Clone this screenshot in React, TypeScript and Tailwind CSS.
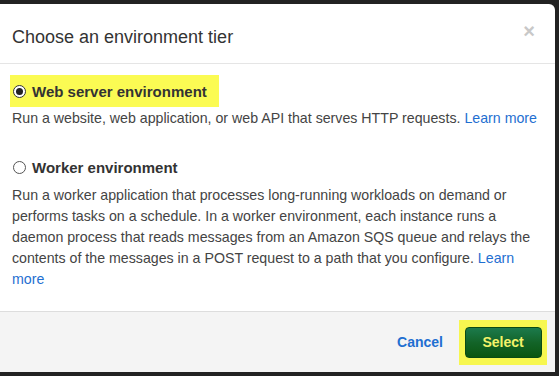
const App = () => {
  return (
    <div className="flex h-[376px] w-[559px] flex-col overflow-hidden bg-[#222222] font-['Liberation_Sans',Arial,sans-serif]">
      <div className="h-[4px] shrink-0" />
      <div className="flex h-[368px] w-[555px] flex-col overflow-hidden rounded-tr-[6px] bg-white">
        <header className="flex h-[60px] shrink-0 items-center justify-between border-b border-[#e5e5e5] pr-[20px] pl-[12px]">
          <h1 className="mt-[7px] text-[18px] text-[#333333]">Choose an environment tier</h1>
          <span className="mb-[5px] text-[20px] font-bold leading-none text-[#c8c8c8]">×</span>
        </header>

        <div className="flex flex-1 flex-col pr-[8px] pl-[12px] pt-[11px] text-[14.2px] leading-[21px] text-[#444444]">
          <label className="-ml-[2px] flex h-[32px] w-[209px] items-center gap-[6px] bg-[#fbfb53] pl-[3px]">
            <span className="flex h-[13px] w-[13px] items-center justify-center rounded-full border border-[#333333] bg-white">
              <span className="h-[7px] w-[7px] rounded-full bg-[#222222]" />
            </span>
            <span className="text-[15px] font-bold text-[#333333]">Web server environment</span>
          </label>
          <p className="mt-[1px]">
            Run a website, web application, or web API that serves HTTP requests.{" "}
            <span className="text-[#1f6fd1]">Learn more</span>
          </p>

          <label className="mt-[28px] flex items-center gap-[6px] pl-[1px]">
            <span className="h-[13px] w-[13px] rounded-full border border-[#555555] bg-white" />
            <span className="text-[15px] font-bold text-[#333333]">Worker environment</span>
          </label>
          <p className="mt-[7px]">
            Run a worker application that processes long-running workloads on demand or
            performs tasks on a schedule. In a worker environment, each instance runs a
            daemon process that reads messages from an Amazon SQS queue and relays the
            contents of the messages in a POST request to a path that you configure.{" "}
            <span className="text-[#1f6fd1]">Learn more</span>
          </p>
        </div>

        <footer className="flex h-[61px] shrink-0 items-center justify-end gap-[16px] border-t border-[#dddddd] bg-[#f4f4f4] pr-[8px]">
          <span className="text-[14px] font-bold text-[#1f6fd1]">Cancel</span>
          <div className="flex h-[45px] w-[88px] items-center justify-center bg-[#f7f750]">
            <button className="h-[31px] w-[77px] rounded-[4px] border border-[#0b4a14] bg-gradient-to-b from-[#1c7a4c] via-[#136428] to-[#0a560f] text-[14px] font-bold text-[#f3f36a]">
              Select
            </button>
          </div>
        </footer>
      </div>
    </div>
  );
};

export default App;
